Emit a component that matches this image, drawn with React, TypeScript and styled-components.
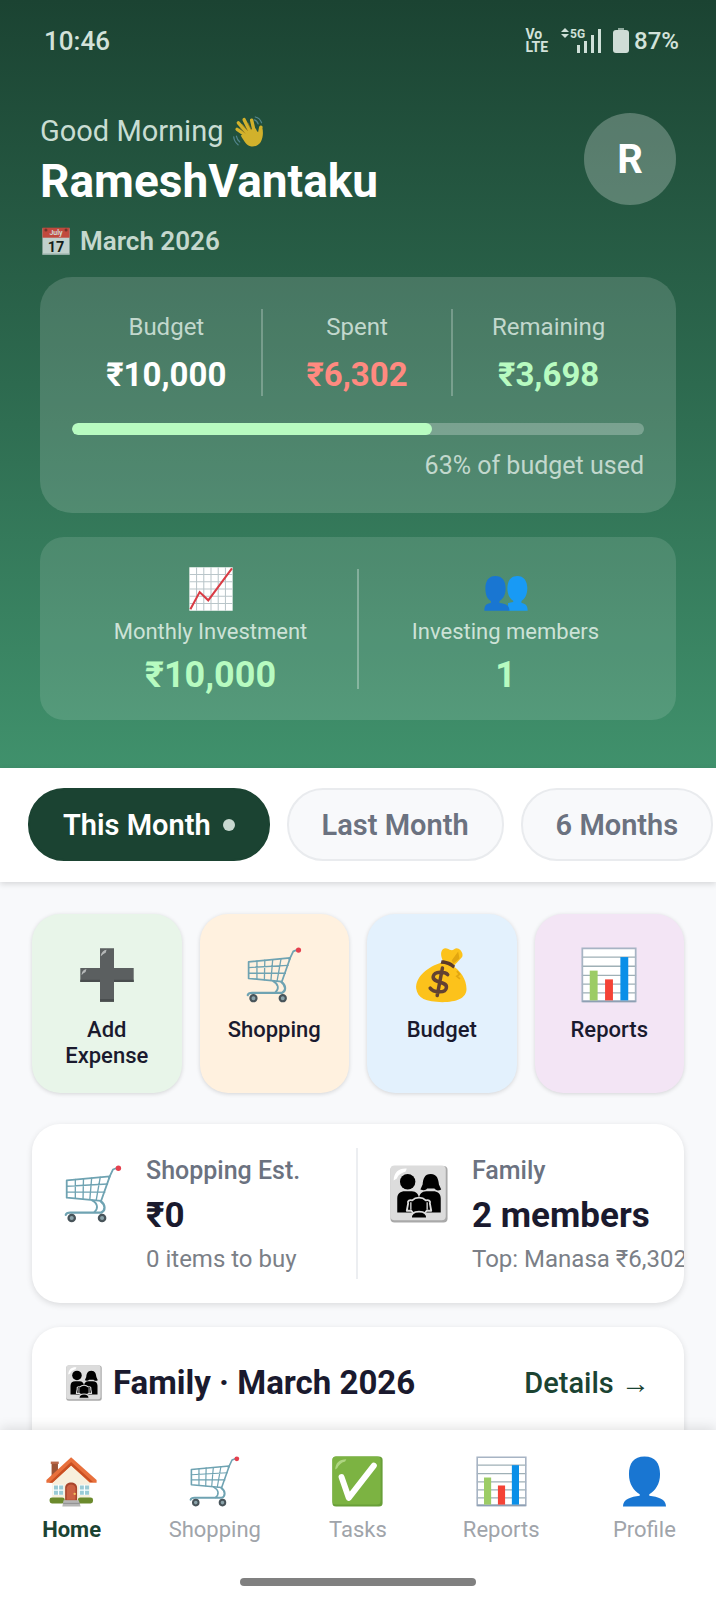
import React from "react";
import styled, { createGlobalStyle } from "styled-components";

const GlobalStyle = createGlobalStyle`
  * { box-sizing: border-box; }
  body {
    margin: 0;
    background: #f8f9fb;
    font-family: Roboto, "Noto Sans", "Liberation Sans", sans-serif;
    color: #1a1a2e;
  }
  button { font-family: inherit; border: 0; margin: 0; cursor: pointer; }
  a { text-decoration: none; color: inherit; }
  h1, h2, p { margin: 0; font-weight: 400; }
`;

/* ---------- icons ---------- */

type IconProps = { size: number; faded?: boolean };

const Svg = styled.svg<{ $faded?: boolean }>`
  display: block;
  flex: none;
  opacity: ${(p) => (p.$faded ? 0.8 : 1)};
`;

const Icon = ({ size, faded, children }: IconProps & { children: React.ReactNode }) => (
  <Svg width={size} height={size} viewBox="0 0 128 128" $faded={faded} aria-hidden="true">
    {children}
  </Svg>
);

const WaveIcon = (p: IconProps) => (
  <Icon {...p}>
    <g fill="none" stroke="#ffca28" strokeLinecap="round">
      <path d="M60 84 17 55" strokeWidth="14" />
      <path d="M66 78 22 28" strokeWidth="14" />
      <path d="M74 72 46 15" strokeWidth="14" />
      <path d="M88 66 77 17" strokeWidth="14" />
      <path d="M108 84 115 47" strokeWidth="15" />
    </g>
    <path
      d="M38 77 58 58 94 52C97 60 100 66 105 68l17-14c3 16 2 38-8 54-9 14-26 20-42 17-17-3-25-19-40-44Z"
      fill="#ffca28"
    />
    <path d="M27 49 50 72M38 34 62 62M61 28l15 30" fill="none" stroke="#d19012" strokeWidth="3" />
    <path
      d="M92 4c14 3 22 12 26 24M88 16c9 2 13 8 16 17M3 86c1 14 8 25 18 33M14 83c2 10 6 18 14 24"
      fill="none"
      stroke="#5f93a3"
      strokeWidth="5"
      strokeLinecap="round"
    />
  </Icon>
);

const CalendarIcon = (p: IconProps) => (
  <Icon {...p}>
    <path d="M2 6h124v120H2z" fill="#e8eeee" />
    <path d="M2 3h124v46H2z" fill="#e8453c" />
    <path d="M2 121h124v6H2z" fill="#b5c4c2" />
    <circle cx="18" cy="14" r="7" fill="#8b2b25" />
    <circle cx="110" cy="14" r="7" fill="#8b2b25" />
    <text x="64" y="37" textAnchor="middle" fontSize="32" fill="#fff">July</text>
    <text x="64" y="112" textAnchor="middle" fontSize="66" fontWeight="700" fill="#111">17</text>
  </Icon>
);

const ChartUpIcon = (p: IconProps) => (
  <Icon {...p}>
    <path d="M1 1h126v126H1z" fill="#fff" />
    <path
      d="M22 1v126M43 1v126M64 1v126M85 1v126M106 1v126M1 22h126M1 43h126M1 64h126M1 85h126M1 106h126"
      stroke="#b9c5c9"
      strokeWidth="3"
      fill="none"
    />
    <path d="M4 123 31 73 56 97 125 4" fill="none" stroke="#d93c45" strokeWidth="6" />
  </Icon>
);

const ProfileIcon = (p: IconProps) => (
  <Icon {...p}>
    <path
      d="M64 1c27 0 39 17 39 45 0 24-12 42-27 50v4c22 3 42 8 42 27H10c0-19 20-24 42-27v-4C37 88 25 70 25 46 25 18 37 1 64 1Z"
      fill="#1976d2"
    />
  </Icon>
);

const PeopleIcon = (p: IconProps) => (
  <Icon {...p}>
    <path
      d="M97 26c18 0 29 14 29 36 0 18-7 31-17 37v6c11 2 18 7 18 22H70V105l15-3v-4C74 91 68 79 68 62c0-22 10-36 29-36Z"
      fill="#189af5"
    />
    <path
      d="M33 26c20 0 30 14 30 36 0 18-7 31-18 37v6c18 2 29 7 29 22H1c0-15 6-20 19-22v-6C9 93 4 80 4 62 4 40 14 26 33 26Z"
      fill="#1976d2"
    />
  </Icon>
);

const PlusIcon = (p: IconProps) => (
  <Icon {...p}>
    <path d="M48 3h32v45h45v32H80v45H48V80H3V48h45Z" fill="#5b5f60" />
    <path d="M48 119h32v6H48zM3 75h45v5H3zM80 75h45v5H80z" fill="#494d4e" />
    <path d="M50 18c2-7 6-11 13-12l-2 7c-5 2-7 5-11 8ZM6 62c1-7 4-10 11-12l-2 7c-4 2-6 4-9 7Z" fill="#b5b8b8" />
  </Icon>
);

const CartIcon = (p: IconProps) => (
  <Icon {...p}>
    <g fill="none" stroke="#6fa3b2" strokeLinecap="round" strokeLinejoin="round">
      <path d="M6 34 101 25 82 79 6 72Z" strokeWidth="4" />
      <path d="M25 32v41M43 30l-1 45M61 29l-4 47M80 27l-9 51M6 47l90-5M6 60l84 0" strokeWidth="3" />
      <path d="M81 80C92 88 92 101 82 105H14c-6 0-9 1-10 5" strokeWidth="5" />
      <path d="M62 78c13 7 14 18 5 26" strokeWidth="4" />
      <path d="M99 29 108 10l10-4" strokeWidth="4" />
    </g>
    <circle cx="120" cy="7" r="6" fill="#e5404e" />
    <circle cx="17" cy="117" r="7" fill="#8ba3aa" stroke="#48545a" strokeWidth="5" />
    <circle cx="84" cy="117" r="7" fill="#8ba3aa" stroke="#48545a" strokeWidth="5" />
  </Icon>
);

const MoneyBagIcon = (p: IconProps) => (
  <Icon {...p}>
    <path d="M67 34C62 22 59 13 66 5c6-6 14 1 18 2 7 2 10-8 18-3 9 5 11 16 7 20L92 42Z" fill="#fcc21b" />
    <path d="M86 31 101 10l3 16-14 12Z" fill="#e2a610" />
    <path
      d="M65 35c10 1 20 5 29 12 11 8 26 26 26 49 0 21-23 30-55 30-38 0-57-9-60-31C3 69 31 45 65 35Z"
      fill="#fcc21b"
    />
    <path d="M63 30c13 0 24 5 31 13l-4 6C82 42 73 38 61 38Z" fill="#5b3a2a" />
    <path d="m98 55 6 7-6 5 7 6" fill="none" stroke="#e2a610" strokeWidth="4" />
    <path
      d="M77 63c-6-7-30-8-33 4-3 17 33 10 30 26-2 14-30 11-37 1M65 48 53 111"
      fill="none"
      stroke="#634232"
      strokeWidth="8"
      strokeLinecap="round"
    />
  </Icon>
);

const BarChartIcon = (p: IconProps) => (
  <Icon {...p}>
    <path d="M2 2h124v124H2z" fill="#fff" />
    <path d="M2 23h124M2 44h124M2 65h124M2 85h124M2 105h124" stroke="#9fb0b6" strokeWidth="3" />
    <path d="M3 3h122v121H3z" fill="none" stroke="#a7b4c4" strokeWidth="4" />
    <path d="M3 124h122" stroke="#8e9fb3" strokeWidth="4" />
    <path d="M20 54h18v68H20z" fill="#9ccc65" />
    <path d="M55 74h18v48H55z" fill="#f44336" />
    <path d="M90 23h18v99H90z" fill="#0a8fe8" />
  </Icon>
);

const FamilyIcon = (p: IconProps) => (
  <Icon {...p}>
    <rect x="1" y="2" width="126" height="125" rx="9" fill="#a9a9a9" />
    <rect x="1" y="1" width="122" height="121" rx="9" fill="#dcdcdc" />
    <path d="M8 34C9 16 19 7 37 8l-3 7c-11 3-16 8-19 15Z" fill="#fff" />
    <circle cx="39" cy="37" r="17" />
    <path d="M90 20c14 0 17 12 18 23l5 11c-7 4-12 2-15-2H82c-3 4-8 5-15 2l5-11c1-12 4-23 18-23Z" />
    <path d="M16 105V74c0-11 7-16 17-16h15c10 0 15 7 16 15 1-8 6-15 16-15h15c10 0 17 5 17 16v31Z" />
    <g fill="#000" stroke="#dcdcdc" strokeWidth="4" strokeLinejoin="round">
      <path d="M64 72c9 0 13 4 15 6 7-2 11 2 9 7l3 16H81c-4 6-7 7-17 7s-13-1-17-7H37l3-16c-2-5 2-9 9-7 2-2 6-6 15-6Z" />
      <path d="M46 118c0-11 7-15 18-15s18 4 18 15Z" />
    </g>
    <path d="M46 82v17M82 82v17" stroke="#dcdcdc" strokeWidth="3" />
  </Icon>
);

const HouseIcon = (p: IconProps) => (
  <Icon {...p}>
    <path d="M14 16h16v38H14z" fill="#9c5336" />
    <path d="M12 14h20v6H12z" fill="#b9684a" />
    <path d="M64 20 110 62v54H16V62Z" fill="#f7efdc" />
    <path d="M63 3 127 60v7h-17L63 24 16 67H1v-7Z" fill="#e8703c" />
    <path d="M63 15 118 65h-8L63 24 16 67H8Z" fill="#c94f22" />
    <path d="M18 72h26v26H18zM83 72h26v26H83z" fill="#f9ffff" />
    <path d="M20 74h10v10H20zM33 74h10v10H33zM20 87h10v10H20zM33 87h10v10H33zM85 74h10v10H85zM98 74h10v10H98zM85 87h10v10H85zM98 87h10v10H98z" fill="#9acbd5" />
    <path d="M48 112V80c0-18 30-18 30 0v32Z" fill="#a9452c" />
    <path d="M52 110V81c0-13 22-13 22 0v29Z" fill="#cc6243" />
    <circle cx="72" cy="95" r="3" fill="#f3c15c" />
    <rect x="9" y="104" width="38" height="15" rx="6" fill="#6b8a2c" />
    <rect x="80" y="104" width="38" height="15" rx="6" fill="#6b8a2c" />
    <path d="M44 111h38l5 16H41Z" fill="#b5b5b5" />
    <path d="M43 119h42" stroke="#949494" strokeWidth="3" />
  </Icon>
);

const CheckIcon = (p: IconProps) => (
  <Icon {...p}>
    <rect x="1" y="1" width="126" height="126" rx="9" fill="#689f38" />
    <rect x="1" y="1" width="121" height="121" rx="9" fill="#7cb342" />
    <path d="M8 34C9 17 18 8 36 8l-3 6c-11 3-16 9-20 17Z" fill="#aed581" />
    <path d="M24 53 42 105 105 24" fill="none" stroke="#fff" strokeWidth="15" strokeLinecap="round" strokeLinejoin="round" />
  </Icon>
);

const SignalIcon = () => (
  <svg width="42" height="26" viewBox="0 0 42 26" aria-hidden="true">
    <g fill="#cfe0d8">
      <path d="m4 0 4 4H0ZM0 6h8l-4 4Z" />
      <path d="M16 17h3v8h-3zM23 13h3v12h-3zM30 7h3v18h-3zM37 1h3v24h-3z" />
    </g>
    <text x="9" y="10" fontSize="12" fontWeight="700" fill="#cfe0d8">5G</text>
  </svg>
);

const BatteryIcon = () => (
  <svg width="16" height="25" viewBox="0 0 16 25" aria-hidden="true">
    <path d="M5 0h6v3H5z" fill="#8fa99d" />
    <rect y="2" width="16" height="23" rx="3" fill="#cfdcd6" />
  </svg>
);

/* ---------- layout ---------- */

const Screen = styled.div`
  display: flex;
  flex-direction: column;
  height: 100vh;
  overflow: hidden;
`;

const Scroll = styled.main`
  flex: 1;
  min-height: 0;
  overflow-y: auto;
  scrollbar-width: none;
`;

const Hero = styled.header`
  background: linear-gradient(#1b4332, #2d6a4f 50%, #40916c);
  padding-bottom: 48px;
`;

const StatusBar = styled.div`
  display: flex;
  align-items: center;
  justify-content: space-between;
  height: 81px;
  padding: 0 37px 0 44px;
  color: #d3e2da;
  font-size: 26px;
  font-weight: 500;
`;

const StatusGroup = styled.div`
  display: flex;
  align-items: center;
  font-size: 24px;
`;

const Volte = styled.span`
  margin-right: 13px;
  font-size: 14px;
  line-height: 13px;
  font-weight: 700;
`;

const Battery = styled.span`
  display: flex;
  align-items: center;
  gap: 5px;
  margin-left: 10px;
`;

const HeroBody = styled.div`
  display: flex;
  flex-direction: column;
  padding: 32px 40px 0;
`;

const Greeting = styled.div`
  display: flex;
  align-items: flex-start;
  justify-content: space-between;
`;

const Hello = styled.p`
  display: flex;
  align-items: center;
  gap: 10px;
  margin-bottom: 4px;
  font-size: 29px;
  line-height: 36px;
  color: #c9ddd3;
`;

const UserName = styled.h1`
  font-size: 46px;
  line-height: 56px;
  font-weight: 700;
  color: #fff;
`;

const Avatar = styled.button`
  width: 92px;
  height: 92px;
  border-radius: 50%;
  background: rgba(255, 255, 255, 0.25);
  color: #fff;
  font-size: 40px;
  font-weight: 700;
`;

const MonthLine = styled.p`
  display: flex;
  align-items: center;
  gap: 10px;
  margin: 16px 0 20px;
  padding-left: 2px;
  font-size: 26px;
  line-height: 32px;
  font-weight: 600;
  color: #c5d8ce;
`;

const BudgetCard = styled.section`
  padding: 32px 32px 31px;
  border-radius: 32px;
  background: rgba(255, 255, 255, 0.15);
`;

const BudgetColumns = styled.div`
  display: grid;
  grid-template-columns: repeat(3, 1fr);
`;

const BudgetColumn = styled.div`
  display: flex;
  flex-direction: column;
  align-items: center;
  gap: 11px;
  padding-top: 2px;
  &:not(:last-child) {
    border-right: 2px solid rgba(255, 255, 255, 0.25);
  }
`;

const BudgetLabel = styled.span`
  font-size: 24px;
  line-height: 32px;
  color: #c2d8cd;
`;

const BudgetValue = styled.strong<{ $color: string }>`
  font-size: 33px;
  line-height: 42px;
  font-weight: 700;
  color: ${(p) => p.$color};
`;

const Track = styled.div`
  height: 12px;
  margin: 27px 0 15px;
  border-radius: 6px;
  background: rgba(255, 255, 255, 0.25);
  overflow: hidden;
`;

const Fill = styled.div`
  height: 100%;
  border-radius: 6px;
  background: #b7fbc0;
`;

const UsedNote = styled.p`
  font-size: 25px;
  line-height: 32px;
  text-align: right;
  color: #c2d8cd;
`;

const InvestCard = styled.section`
  display: flex;
  align-items: center;
  margin-top: 24px;
  padding: 26px 24px 25px;
  border-radius: 24px;
  background: rgba(255, 255, 255, 0.12);
`;

const InvestColumn = styled.div`
  flex: 1;
  display: flex;
  flex-direction: column;
  align-items: center;
  padding-top: 4px;
`;

const InvestDivider = styled.div`
  width: 2px;
  height: 120px;
  background: rgba(255, 255, 255, 0.3);
`;

const InvestLabel = styled.span`
  margin: 6px 0 8px;
  font-size: 22px;
  line-height: 30px;
  color: #cde2d7;
`;

const InvestValue = styled.strong`
  font-size: 36px;
  line-height: 40px;
  font-weight: 700;
  color: #b7fbc0;
`;

const Tabs = styled.nav`
  display: flex;
  gap: 17px;
  padding: 20px 28px 21px;
  background: #fff;
  overflow: hidden;
  box-shadow: 0 2px 6px rgba(0, 0, 0, 0.14);
`;

const Tab = styled.button<{ $active?: boolean }>`
  display: flex;
  flex: none;
  align-items: center;
  gap: 12px;
  height: 73px;
  padding: 0 33px;
  border: 2px solid ${(p) => (p.$active ? "#1b4332" : "#e9ebee")};
  border-radius: 36px;
  background: ${(p) => (p.$active ? "#1b4332" : "#f8f9fb")};
  color: ${(p) => (p.$active ? "#fff" : "#6b7280")};
  font-size: 29px;
  font-weight: 600;
  white-space: nowrap;
`;

const Dot = styled.span`
  width: 12px;
  height: 12px;
  border-radius: 50%;
  background: #c8d8d0;
`;

const Content = styled.div`
  display: flex;
  flex-direction: column;
  padding: 32px;
`;

const QuickGrid = styled.div`
  display: grid;
  grid-template-columns: repeat(4, 1fr);
  gap: 18px;
`;

const QuickAction = styled.button<{ $tint: string }>`
  display: flex;
  flex-direction: column;
  align-items: center;
  gap: 14px;
  padding: 33px 16px 24px;
  border-radius: 28px;
  background: ${(p) => p.$tint};
  box-shadow: 0 1px 4px rgba(0, 0, 0, 0.15);
  color: #1a1a2e;
  font-size: 22px;
  line-height: 26px;
  font-weight: 500;
`;

const Card = styled.section`
  border-radius: 28px;
  background: #fff;
  box-shadow: 0 2px 6px rgba(0, 0, 0, 0.12);
`;

const SummaryCard = styled(Card)`
  display: grid;
  grid-template-columns: repeat(2, minmax(0, 1fr));
  margin: 31px 0 24px;
  padding: 24px 0;
  overflow: hidden;
`;

const SummaryCell = styled.div`
  display: flex;
  gap: 24px;
  padding: 0 0 5px 32px;
  white-space: nowrap;
  & > svg {
    margin-top: 17px;
  }
  &:not(:last-child) {
    border-right: 2px solid #eceef1;
  }
`;

const SummaryText = styled.div`
  display: flex;
  flex-direction: column;
  padding-top: 8px;
`;

const SummaryLabel = styled.span`
  font-size: 25px;
  line-height: 30px;
  font-weight: 500;
  color: #6b7280;
`;

const SummaryValue = styled.strong`
  margin: 8px 0 6px;
  font-size: 35px;
  line-height: 44px;
  font-weight: 700;
`;

const SummaryNote = styled.span`
  font-size: 24px;
  line-height: 30px;
  color: #7b7f87;
`;

const FamilyCard = styled(Card)`
  min-height: 320px;
  padding: 36px 34px;
`;

const FamilyHeader = styled.div`
  display: flex;
  align-items: center;
  justify-content: space-between;
  line-height: 40px;
`;

const FamilyTitle = styled.h2`
  display: flex;
  align-items: center;
  gap: 11px;
  font-size: 33px;
  font-weight: 700;
`;

const DetailsLink = styled.a`
  font-size: 29px;
  font-weight: 500;
  color: #1b4332;
`;

const BottomBar = styled.footer`
  display: flex;
  flex-direction: column;
  align-items: center;
  padding: 26px 0 14px;
  background: #fff;
  box-shadow: 0 -2px 12px rgba(0, 0, 0, 0.12);
  z-index: 1;
`;

const BottomNav = styled.nav`
  display: grid;
  grid-template-columns: repeat(5, 1fr);
  width: 100%;
`;

const NavItem = styled.a<{ $active?: boolean }>`
  display: flex;
  flex-direction: column;
  align-items: center;
  gap: 9px;
  font-size: 22px;
  line-height: 28px;
  font-weight: ${(p) => (p.$active ? 700 : 400)};
  color: ${(p) => (p.$active ? "#1b4332" : "#a0a4aa")};
`;

const HomeIndicator = styled.div`
  width: 33%;
  height: 8px;
  margin-top: 34px;
  border-radius: 4px;
  background: #808080;
`;

/* ---------- data ---------- */

const budget = [
  { label: "Budget", value: "₹10,000", color: "#ffffff" },
  { label: "Spent", value: "₹6,302", color: "#ff8a80" },
  { label: "Remaining", value: "₹3,698", color: "#b7fbc0" },
];

const quickActions = [
  { label: "Add Expense", tint: "#e8f5e9", Glyph: PlusIcon },
  { label: "Shopping", tint: "#fff1df", Glyph: CartIcon },
  { label: "Budget", tint: "#e3f1fd", Glyph: MoneyBagIcon },
  { label: "Reports", tint: "#f3e5f5", Glyph: BarChartIcon },
];

const navItems = [
  { label: "Home", Glyph: HouseIcon, active: true },
  { label: "Shopping", Glyph: CartIcon },
  { label: "Tasks", Glyph: CheckIcon },
  { label: "Reports", Glyph: BarChartIcon },
  { label: "Profile", Glyph: ProfileIcon },
];

const usedPercent = 63;

export default function App() {
  return (
    <>
      <GlobalStyle />
      <Screen>
        <Scroll>
          <Hero>
            <StatusBar>
              <span>10:46</span>
              <StatusGroup>
                <Volte>
                  Vo
                  <br />
                  LTE
                </Volte>
                <SignalIcon />
                <Battery>
                  <BatteryIcon />
                  87%
                </Battery>
              </StatusGroup>
            </StatusBar>
            <HeroBody>
              <Greeting>
                <div>
                  <Hello>
                    Good Morning <WaveIcon size={31} faded />
                  </Hello>
                  <UserName>RameshVantaku</UserName>
                </div>
                <Avatar type="button" aria-label="Account R">R</Avatar>
              </Greeting>
              <MonthLine>
                <CalendarIcon size={28} faded />
                March 2026
              </MonthLine>
              <BudgetCard>
                <BudgetColumns>
                  {budget.map((b) => (
                    <BudgetColumn key={b.label}>
                      <BudgetLabel>{b.label}</BudgetLabel>
                      <BudgetValue $color={b.color}>{b.value}</BudgetValue>
                    </BudgetColumn>
                  ))}
                </BudgetColumns>
                <Track role="progressbar" aria-label="Budget used" aria-valuenow={usedPercent}>
                  <Fill style={{ width: `${usedPercent}%` }} />
                </Track>
                <UsedNote>{usedPercent}% of budget used</UsedNote>
              </BudgetCard>
              <InvestCard>
                <InvestColumn>
                  <ChartUpIcon size={44} />
                  <InvestLabel>Monthly Investment</InvestLabel>
                  <InvestValue>₹10,000</InvestValue>
                </InvestColumn>
                <InvestDivider />
                <InvestColumn>
                  <PeopleIcon size={44} />
                  <InvestLabel>Investing members</InvestLabel>
                  <InvestValue>1</InvestValue>
                </InvestColumn>
              </InvestCard>
            </HeroBody>
          </Hero>
          <Tabs aria-label="Period">
            <Tab type="button" $active>
              This Month
              <Dot />
            </Tab>
            <Tab type="button">Last Month</Tab>
            <Tab type="button">6 Months</Tab>
          </Tabs>
          <Content>
            <QuickGrid>
              {quickActions.map(({ label, tint, Glyph }) => (
                <QuickAction key={label} type="button" $tint={tint}>
                  <Glyph size={56} />
                  {label}
                </QuickAction>
              ))}
            </QuickGrid>
            <SummaryCard>
              <SummaryCell>
                <CartIcon size={58} />
                <SummaryText>
                  <SummaryLabel>Shopping Est.</SummaryLabel>
                  <SummaryValue>₹0</SummaryValue>
                  <SummaryNote>0 items to buy</SummaryNote>
                </SummaryText>
              </SummaryCell>
              <SummaryCell>
                <FamilyIcon size={58} />
                <SummaryText>
                  <SummaryLabel>Family</SummaryLabel>
                  <SummaryValue>2 members</SummaryValue>
                  <SummaryNote>Top: Manasa ₹6,302</SummaryNote>
                </SummaryText>
              </SummaryCell>
            </SummaryCard>
            <FamilyCard>
              <FamilyHeader>
                <FamilyTitle>
                  <FamilyIcon size={36} />
                  Family · March 2026
                </FamilyTitle>
                <DetailsLink href="#details">Details →</DetailsLink>
              </FamilyHeader>
            </FamilyCard>
          </Content>
        </Scroll>
        <BottomBar>
          <BottomNav aria-label="Main">
            {navItems.map(({ label, Glyph, active }) => (
              <NavItem key={label} href={`#${label.toLowerCase()}`} $active={active}>
                <Glyph size={51} />
                {label}
              </NavItem>
            ))}
          </BottomNav>
          <HomeIndicator />
        </BottomBar>
      </Screen>
    </>
  );
}
